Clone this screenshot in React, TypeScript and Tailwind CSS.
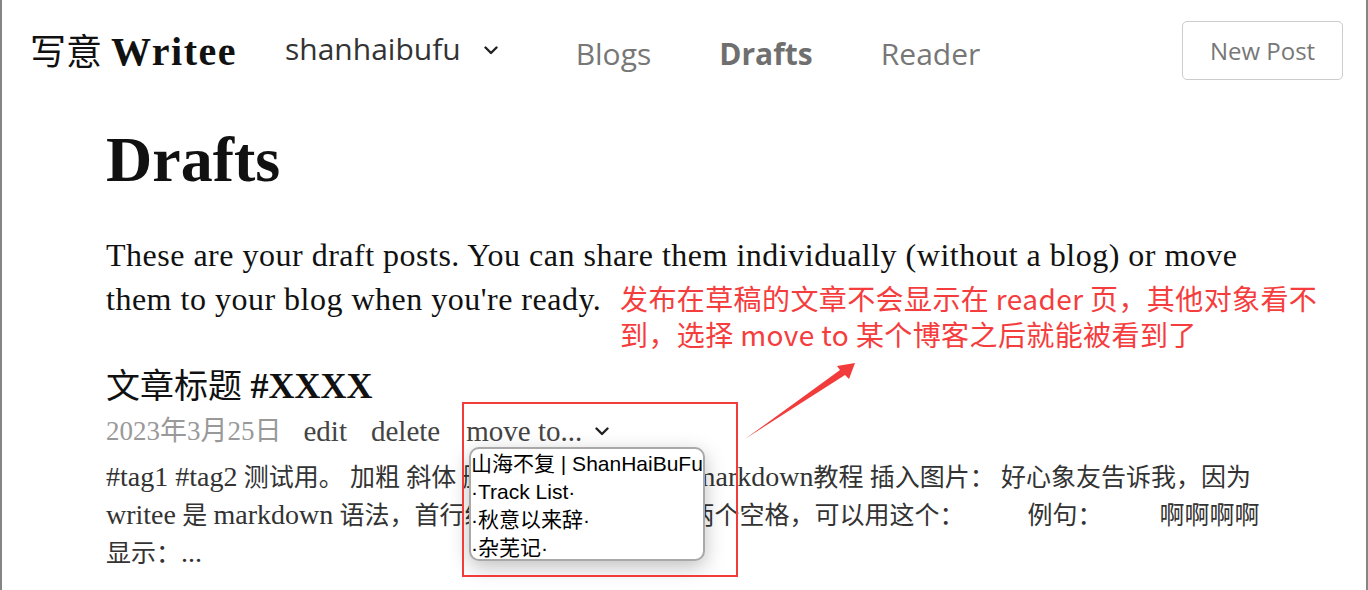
const serif = "font-['Liberation_Serif','Noto_Sans_CJK_SC',serif]";
const sans = "font-['Open_Sans','Noto_Sans_CJK_SC',sans-serif]";

function Chevron({ className }: { className?: string }) {
  return (
    <svg viewBox="0 0 14 9" className={className} fill="none">
      <polyline points="1.5,1.5 7,7 12.5,1.5" stroke="currentColor" strokeWidth="2.4" strokeLinecap="round" strokeLinejoin="round" />
    </svg>
  );
}

// latin runs are set a little larger than the CJK ones, like the original mixed fonts
function L({ children }: { children: React.ReactNode }) {
  return <span className="text-[28px]">{children}</span>;
}

const blogs = ["山海不复 | ShanHaiBuFu", "·Track List·", "·秋意以来辞·", "·杂芜记·"];

export default function App() {
  return (
    <div className="relative h-[590px] w-full overflow-hidden bg-white border-x-2 border-[#858585]">
      {/* Header */}
      <header className="flex items-center pl-[28px] pr-[23px] pt-[21px]">
        <a className={`${serif} text-[36px] leading-none text-[#111] whitespace-nowrap pt-[3px]`}>
          写意 <b className="text-[40px] font-bold tracking-[1.5px]">Writee</b>
        </a>
        <div className={`${sans} ml-[48px] flex items-center text-[30px] leading-none text-[#333] pb-[4px]`}>
          shanhaibufu
          <Chevron className="ml-[23px] mt-[4px] w-[14px] h-[9px] text-[#222]" />
        </div>
        <nav className={`${sans} ml-[78px] flex items-center gap-[68px] text-[30px] leading-none text-[#777] pt-[6px]`}>
          <a>Blogs</a>
          <a className="font-bold text-[#6f6f6f]">Drafts</a>
          <a>Reader</a>
        </nav>
        <button className={`${sans} ml-auto h-[59px] w-[161px] rounded-[5px] border border-[#ccc] text-[24px] text-[#777]`}>
          New Post
        </button>
      </header>

      {/* Content */}
      <main className="pl-[104px] pr-[100px]">
        <h1 className={`${serif} mt-[48px] text-[64px] font-bold leading-none text-[#111]`}>Drafts</h1>
        <p className={`${serif} mt-[41px] text-[32px] tracking-[0.5px] leading-[44px] text-[#111] whitespace-nowrap`}>
          These are your draft posts. You can share them individually (without a blog) or move
          <br />
          them to your blog when you're ready.
        </p>

        <div className="mt-[45px]">
          <h3 className={`${serif} text-[34px] leading-[40px] text-[#111] whitespace-nowrap`}>
            文章标题 <b className="text-[36px] font-bold">#XXXX</b>
          </h3>
          <div className={`${serif} mt-[6px] flex items-center text-[29px] leading-[36px] text-[#444] whitespace-nowrap`}>
            <span className="text-[27px] text-[#999]">2023年3月25日</span>
            <a className="ml-[22px]">edit</a>
            <a className="ml-[24px]">delete</a>
            <span className="ml-[26px] flex items-center">
              move to...
              <Chevron className="ml-[13px] w-[14px] h-[9px] text-[#222]" />
            </span>
          </div>
          <div className={`${serif} mt-[9px] text-[25px] leading-[37px] text-[#333] whitespace-nowrap`}>
            <L>#tag1 #tag2</L> 测试用。 加粗 斜体 删除线引用代码链接 <L>markdown</L>教程 插入图片： 好心象友告诉我，因为
            <br />
            <L>writee</L> 是 <L>markdown</L> 语法，首行缩进不能直接手动打两个空格，可以用这个：
            <span className="inline-block w-[63px]" />例句：<span className="inline-block w-[57px]" />啊啊啊啊
            <br />
            显示：<L>...</L>
          </div>
        </div>
      </main>

      {/* Open select list */}
      <div className="absolute left-[467px] top-[447px] w-[236px] h-[114px] rounded-[10px] border-2 border-[#a9a9a9] bg-white pt-[1px] shadow-[0_6px_20px_rgba(0,0,0,0.25)] overflow-hidden">
        {blogs.map((b) => (
          <div key={b} className="font-['Liberation_Sans','Noto_Sans_CJK_SC',sans-serif] text-[21px] leading-[28px] text-black whitespace-nowrap">
            {b}
          </div>
        ))}
      </div>

      {/* Annotation */}
      <div className="absolute left-[460px] top-[402px] w-[276px] h-[175px] border-2 border-[#f23c3c]" />
      <div className="absolute left-[618px] top-[280px] font-['Noto_Sans_CJK_SC',sans-serif] text-[28px] tracking-[0.4px] leading-[36px] text-[#f53d3d] whitespace-nowrap">
        发布在草稿的文章不会显示在 reader 页，其他对象看不
        <br />
        到，选择 move to 某个博客之后就能被看到了
      </div>
      <svg className="absolute left-0 top-0 pointer-events-none" width="1368" height="590">
        <polygon points="743,439 843,375 847,379 853,363 835,366 838,370" fill="#f23c3c" />
      </svg>
    </div>
  );
}
